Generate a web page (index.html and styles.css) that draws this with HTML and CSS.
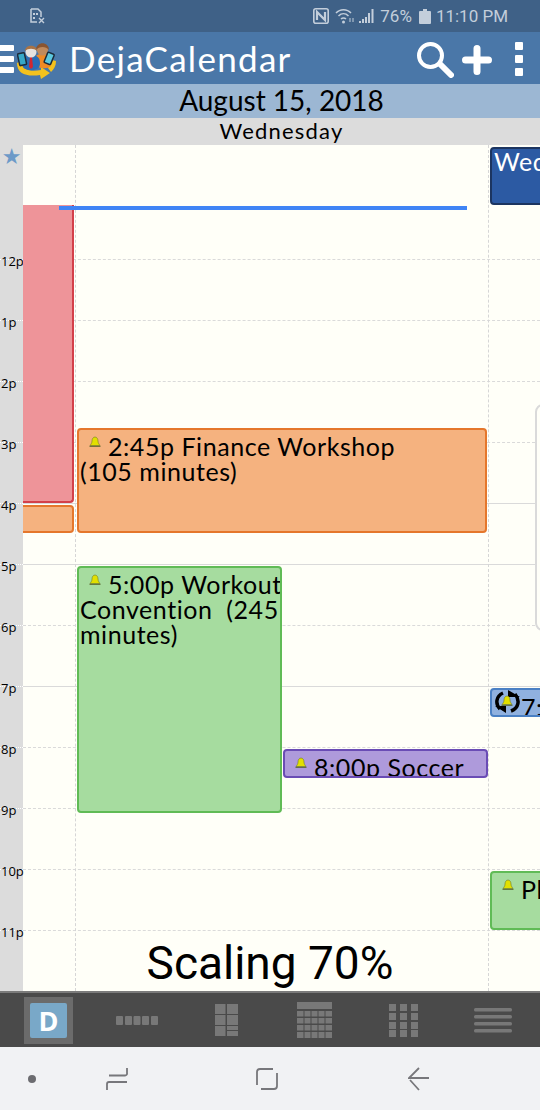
FILE: index.html
```html
<!DOCTYPE html>
<html lang="en">
<head>
  <meta charset="UTF-8" />
  <title>DejaCalendar</title>
  <link rel="stylesheet" href="styles.css">
</head>
<body>
  <div class="status-bar">
    <svg class="sim-icon" width="15" height="16" viewBox="0 0 15 16">
      <path d="M1 1h7l3 3v5M1 1v13h6" fill="none" stroke="#c3cedb" stroke-width="1.5"/>
      <path d="M3 5h2v2H3zM6 5h2v2H6zM3 9h2v2H3z" fill="#c3cedb"/>
      <path d="M9 10l5 5M14 10l-5 5" stroke="#c3cedb" stroke-width="1.4"/>
    </svg>
    <div class="status-right">
      <svg width="16" height="16" viewBox="0 0 16 16">
        <rect x="0.8" y="0.8" width="14.4" height="14.4" rx="2" fill="none" stroke="#c3cedb" stroke-width="1.6"/>
        <path d="M4 12V4l8 8V4" fill="none" stroke="#c3cedb" stroke-width="2.2"/>
      </svg>
      <svg class="wifi" width="21" height="16" viewBox="0 0 21 16">
        <path d="M1 5c4-4.500 11-4.500 15 0M3.500 8c3-3 7-3 10 0M6 11c1.500-1.500 3.500-1.500 5 0" fill="none" stroke="#c3cedb" stroke-width="1.5"/>
        <circle cx="8.500" cy="14" r="1.500" fill="#c3cedb"/>
        <path d="M15 10v4M18 14v-4" stroke="#97a9be" stroke-width="1.500"/>
      </svg>
      <svg class="signal" width="16" height="16" viewBox="0 0 16 16">
        <path d="M1 15v-2M4 15v-4M7 15V9M10 15V5M13.500 15V1" stroke="#c3cedb" stroke-width="2"/>
      </svg>
      <span class="status-text pct">76%</span>
      <svg class="battery" width="12" height="15" viewBox="0 0 12 15">
        <path d="M4 0h4v2h3a1 1 0 0 1 1 1v11a1 1 0 0 1-1 1H1a1 1 0 0 1-1-1V3a1 1 0 0 1 1-1h3z" fill="#c3cedb"/>
      </svg>
      <span class="status-text clock">11:10 PM</span>
    </div>
  </div>

  <header class="app-bar">
    <div class="menu-bars"><span></span><span></span><span></span></div>
    <svg class="logo" width="40" height="38" viewBox="0 0 40 38">
      <path d="M0 21C0 32 10 35 23 33l1 4 9-6-9-6v3C14 30 6 29 4 19z" fill="#f4c21d"/>
      <path d="M34 30c3-3 5-6 5-11l-4-1-4 8z" fill="#f4c21d"/>
      <path d="M19 14c3-3 11-3 14 0l1 10c-3 3-11 3-14 0z" fill="#ef8a25"/>
      <circle cx="25.500" cy="8" r="5.500" fill="#c08a5c"/>
      <path d="M19 8c0-9 13-9 13 0-3-4-10-4-13 0z" fill="#8a5530"/>
      <path d="M5 21c0-7 5-8 9-8s9 1 9 8c0 5-3 7-9 7s-9-2-9-7z" fill="#2a6db4"/>
      <path d="M13 15h2l1 10-2 2-2-2z" fill="#d3272e"/>
      <circle cx="14" cy="10" r="5.500" fill="#e6e2de"/>
      <path d="M8 9c0-7 12-7 12 0-3-3-9-3-12 0z" fill="#a87346"/>
      <rect x="0" y="0" width="7" height="12" rx="1" transform="translate(1 15) rotate(-12) translate(0 -3)" fill="#35a8c7" stroke="#1c2b3a" stroke-width="1.500"/>
      <rect x="0" y="0" width="7" height="11" rx="1" transform="translate(31 10) rotate(22)" fill="#5cc8de" stroke="#1c2b3a" stroke-width="1.500"/>
    </svg>
    <h1 class="app-title">DejaCalendar</h1>
    <div class="app-actions">
      <svg width="37" height="36" viewBox="0 0 37 36">
        <circle cx="13.500" cy="13.500" r="11.500" fill="none" stroke="#fff" stroke-width="4"/>
        <path d="M23 22l11 11" stroke="#fff" stroke-width="6" stroke-linecap="round"/>
      </svg>
      <svg class="plus" width="30" height="30" viewBox="0 0 30 30">
        <path d="M3.500 15h23M15 3.500v23" stroke="#fff" stroke-width="7" stroke-linecap="round"/>
      </svg>
      <div class="more-dots"><span></span><span></span><span></span></div>
    </div>
  </header>

  <div class="date-bar">August 15, 2018</div>
  <div class="weekday-bar">Wednesday</div>

  <main class="day-grid">
    <div class="allday-row"><span class="star">★</span></div>
    <div class="hour-row first"><span class="hour-label"></span><span class="hour-lane"></span></div>
    <div class="hour-row"><span class="hour-label">12p</span><span class="hour-lane"></span></div>
    <div class="hour-row"><span class="hour-label">1p</span><span class="hour-lane"></span></div>
    <div class="hour-row"><span class="hour-label">2p</span><span class="hour-lane"></span></div>
    <div class="hour-row"><span class="hour-label">3p</span><span class="hour-lane"></span></div>
    <div class="hour-row"><span class="hour-label">4p</span><span class="hour-lane solid"></span></div>
    <div class="hour-row"><span class="hour-label">5p</span><span class="hour-lane solid"></span></div>
    <div class="hour-row"><span class="hour-label">6p</span><span class="hour-lane"></span></div>
    <div class="hour-row"><span class="hour-label">7p</span><span class="hour-lane solid"></span></div>
    <div class="hour-row"><span class="hour-label">8p</span><span class="hour-lane"></span></div>
    <div class="hour-row"><span class="hour-label">9p</span><span class="hour-lane"></span></div>
    <div class="hour-row"><span class="hour-label">10p</span><span class="hour-lane"></span></div>
    <div class="hour-row"><span class="hour-label">11p</span><span class="hour-lane"></span></div>

    <div class="column-line line-a"></div>
    <div class="column-line line-b"></div>

    <div class="event ghost ev-ghost"></div>
    <div class="event pink ev-pink"></div>
    <div class="event orange ev-orange-small"></div>
    <div class="event orange ev-finance">
      <svg class="bell" viewBox="0 0 12 12"><use href="#bell"/></svg>
      <p class="event-text">2:45p Finance Workshop<br>(105 minutes)</p>
    </div>
    <div class="event green ev-workout">
      <svg class="bell" viewBox="0 0 12 12"><use href="#bell"/></svg>
      <p class="event-text">5:00p Workout<br>Convention&nbsp; (245<br>minutes)</p>
    </div>
    <div class="event purple ev-soccer">
      <svg class="bell" viewBox="0 0 12 12"><use href="#bell"/></svg>
      <p class="event-text">8:00p Soccer</p>
    </div>
    <div class="event navy ev-wed"><p class="event-text plain">Wed</p></div>
    <div class="event sky ev-seven">
      <svg class="sync" width="28" height="24" viewBox="0 0 28 24">
        <path d="M9 3C2 6 1 14 6 19M17 21c8-3 9-11 4-17" fill="none" stroke="#000" stroke-width="3.500"/>
        <path d="M1 16h11v7zM26 7H14V0z" fill="#000"/>
      </svg>
      <svg class="bell" viewBox="0 0 12 12"><use href="#bell"/></svg>
      <p class="event-text seven">7:00p</p>
    </div>
    <div class="event green ev-plan">
      <svg class="bell" viewBox="0 0 12 12"><use href="#bell"/></svg>
      <p class="event-text">Plan</p>
    </div>

    <div class="now-line"></div>
    <div class="scale-toast">Scaling 70%</div>
  </main>

  <nav class="view-tabs">
    <div class="view-tab"><span class="day-tile"><span class="day-letter">D</span></span></div>
    <div class="view-tab">
      <svg width="42" height="9" viewBox="0 0 42 9" fill="#787878">
        <rect x="0" width="7" height="9" rx="1"/><rect x="9" width="7" height="9" rx="1"/><rect x="17.500" width="7" height="9" rx="1"/><rect x="26" width="7" height="9" rx="1"/><rect x="35" width="7" height="9" rx="1"/>
      </svg>
    </div>
    <div class="view-tab">
      <svg width="23" height="32" viewBox="0 0 23 32" fill="#787878">
        <rect width="10.500" height="10"/><rect x="12" width="11" height="10"/><rect y="11" width="10.500" height="10"/><rect x="12" y="11" width="11" height="10"/><rect y="22" width="10.500" height="10"/><rect x="12" y="22" width="11" height="4"/><rect x="12" y="27" width="11" height="5"/>
      </svg>
    </div>
    <div class="view-tab">
      <svg width="35" height="36" viewBox="0 0 35 36" fill="#787878">
        <rect width="35" height="7"/>
        <rect y="9" width="35" height="5.500"/><rect y="16" width="35" height="5.500"/><rect y="23" width="35" height="5.500"/><rect y="30" width="35" height="6"/>
        <path d="M7 9v27M14 9v27M21 9v27M28 9v27" stroke="#4a4a4a" stroke-width="1"/>
      </svg>
    </div>
    <div class="view-tab">
      <svg width="29" height="33" viewBox="0 0 29 33" fill="#787878">
        <rect width="7" height="7"/><rect x="11" width="7" height="7"/><rect x="22" width="7" height="7"/>
        <rect y="9" width="7" height="7"/><rect x="11" y="9" width="7" height="7"/><rect x="22" y="9" width="7" height="7"/>
        <rect y="18" width="7" height="7"/><rect x="11" y="18" width="7" height="7"/><rect x="22" y="18" width="7" height="7"/>
        <rect y="26" width="7" height="7"/><rect x="11" y="26" width="7" height="7"/><rect x="22" y="26" width="7" height="7"/>
      </svg>
    </div>
    <div class="view-tab">
      <svg width="38" height="25" viewBox="0 0 38 25" fill="#787878">
        <rect width="38" height="3.500" rx="1.500"/><rect y="7" width="38" height="3.500" rx="1.500"/><rect y="14" width="38" height="3.500" rx="1.500"/><rect y="21" width="38" height="3.500" rx="1.500"/>
      </svg>
    </div>
  </nav>

  <footer class="nav-bar">
    <svg class="nav-dot" width="8" height="8" viewBox="0 0 8 8"><circle cx="4" cy="4" r="4" fill="#6c6c70"/></svg>
    <svg class="nav-recent" width="22" height="24" viewBox="0 0 22 24">
      <path d="M21 1v5a2 2 0 0 1-2 2.500H3M1 23v-6a2 2 0 0 1 2-2h18" fill="none" stroke="#77777b" stroke-width="1.800"/>
    </svg>
    <svg class="nav-home" width="22" height="22" viewBox="0 0 22 22">
      <path d="M1 17V4a3 3 0 0 1 3-3h13M21 5v13a3 3 0 0 1-3 3H5" fill="none" stroke="#77777b" stroke-width="1.800"/>
    </svg>
    <svg class="nav-back" width="22" height="24" viewBox="0 0 22 24">
      <path d="M11 1L1 11h20M2 13l9 10" fill="none" stroke="#77777b" stroke-width="1.800"/>
    </svg>
  </footer>

  <svg class="defs" width="0" height="0">
    <symbol id="bell" viewBox="0 0 12 12">
      <path d="M6 1c-2 0-3 2-3 4 0 2-1 3-2 4.500h10C10 8 9 7 9 5c0-2-1-4-3-4z" fill="#e2e000" stroke="#6d7a2a" stroke-width="0.600"/>
      <rect x="0.500" y="9.800" width="11" height="1" fill="#55602c"/>
    </symbol>
  </svg>
</body>
</html>
```

FILE: styles.css
```css
* {
  box-sizing: border-box;
}

body {
  margin: 0;
  width: 540px;
  height: 1110px;
  overflow: hidden;
  display: flex;
  flex-direction: column;
  font-family: Lato, "Open Sans", sans-serif;
  color: #000;
  background-color: #fffff8;
}

/* Status bar */
.status-bar {
  height: 32px;
  flex: none;
  display: flex;
  align-items: center;
  justify-content: space-between;
  padding: 0 32px 0 30px;
  background-color: #3f6187;
}

.status-right {
  display: flex;
  align-items: center;
}

.wifi {
  margin-left: 6px;
}

.signal {
  margin-left: 3px;
}

.status-text {
  font-family: Roboto, sans-serif;
  font-size: 17px;
  color: #c3cedb;
}

.pct {
  margin-left: 5px;
}

.battery {
  margin-left: 7px;
}

.clock {
  margin-left: 5px;
}

/* App bar */
.app-bar {
  height: 52px;
  flex: none;
  display: flex;
  align-items: center;
  background-color: #4a77a8;
}

.menu-bars {
  width: 14px;
  display: flex;
  flex-direction: column;
  gap: 5px;
  margin-top: 2px;
}

.menu-bars span {
  display: block;
  height: 6px;
  border-radius: 0 1px 1px 0;
  background-color: #fff;
}

.logo {
  margin-left: 3px;
  margin-top: 6px;
  flex: none;
}

.app-title {
  margin: 0 0 0 12px;
  font-size: 35px;
  font-weight: 400;
  color: #fff;
  letter-spacing: 1.3px;
}

.app-actions {
  margin-left: auto;
  display: flex;
  align-items: center;
  padding-right: 17px;
  margin-top: 4px;
}

.plus {
  margin-left: 8px;
}

.more-dots {
  margin-left: 23px;
  display: flex;
  flex-direction: column;
  gap: 5px;
  margin-top: -2px;
}

.more-dots span {
  display: block;
  width: 8px;
  height: 8px;
  border-radius: 1px;
  background-color: #fff;
}

/* Date headers */
.date-bar {
  height: 34px;
  flex: none;
  padding-left: 23px;
  text-align: center;
  font-size: 28px;
  line-height: 33px;
  background-color: #9cb7d3;
}

.weekday-bar {
  height: 27px;
  flex: none;
  padding-left: 23px;
  text-align: center;
  font-size: 22px;
  line-height: 25px;
  letter-spacing: 1.2px;
  background-color: #dcdcdc;
}

/* Day grid */
.day-grid {
  flex: 1;
  position: relative;
  overflow: hidden;
  background: linear-gradient(to right, #dcdcdc 23px, #fffff8 23px);
}

.allday-row {
  height: 53px;
}

.star {
  display: block;
  width: 23px;
  text-align: center;
  font-family: "DejaVu Sans", sans-serif;
  font-size: 22px;
  line-height: 24px;
  color: #6c9ac8;
}

.hour-row {
  height: 61px;
  display: grid;
  grid-template-columns: 23px 1fr;
  background: repeating-linear-gradient(to right, #fff 0 1px, transparent 1px 2px) 0 0 / 23px 1px no-repeat;
}

.hour-row.first {
  background: none;
}

.hour-row.first .hour-lane {
  border-top: 0;
}

.hour-label {
  margin-top: -6px;
  height: 16px;
  font-family: "Open Sans", sans-serif;
  font-size: 13px;
  line-height: 16px;
  padding-left: 1px;
  white-space: nowrap;
}

.hour-lane {
  border-top: 1px dashed #dadada;
}

.hour-lane.solid {
  border-top: 1px solid #dadada;
}

.column-line {
  position: absolute;
  top: 0;
  bottom: 0;
  border-left: 1px dashed #d6d6d6;
}

.line-a {
  left: 75px;
}

.line-b {
  left: 488px;
}

/* Events */
.event {
  position: absolute;
  overflow: hidden;
  border: 2px solid;
  border-radius: 4px;
}

.event-text {
  margin: 0;
  padding: 4px 0 0 1px;
  font-size: 25px;
  line-height: 25px;
  letter-spacing: 0.55px;
  white-space: nowrap;
}

.bell + .event-text {
  text-indent: 28px;
}

.event-text.plain {
  color: #fff;
  padding-left: 2px;
  padding-top: 0;
}

.event-text.seven {
  padding-top: 5px;
}

.bell {
  position: absolute;
  left: 10px;
  top: 6px;
  width: 12px;
  height: 12px;
}

.sync {
  position: absolute;
  left: 2px;
  top: 0;
}

.pink {
  background-color: #ee9499;
  border-color: #d3404a;
}

.orange {
  background-color: #f5b27f;
  border-color: #e5772c;
}

.green {
  background-color: #a6dc9f;
  border-color: #60bb56;
}

.purple {
  background-color: #ae9adb;
  border-color: #6a4cb5;
}

.navy {
  background-color: #2c5aa3;
  border-color: #1c3560;
}

.sky {
  background-color: #90b1df;
  border-color: #4a80c4;
}

.ghost {
  background-color: #fffff8;
  border-color: #dadada;
  border-radius: 8px;
}

.ev-ghost {
  left: 535px;
  top: 259px;
  width: 40px;
  height: 227px;
}

.ev-pink {
  left: 23px;
  top: 60px;
  width: 51px;
  height: 298px;
  border-width: 0 2px 2px 0;
  border-radius: 0 0 4px 0;
}

.ev-orange-small {
  left: 23px;
  top: 360px;
  width: 51px;
  height: 28px;
  border-left: 0;
  border-radius: 0 4px 4px 0;
}

.ev-finance {
  left: 77px;
  top: 283px;
  width: 410px;
  height: 105px;
}

.ev-workout {
  left: 77px;
  top: 421px;
  width: 205px;
  height: 247px;
}

.ev-soccer {
  left: 283px;
  top: 604px;
  width: 205px;
  height: 29px;
}

.ev-wed {
  left: 490px;
  top: 2px;
  width: 70px;
  height: 58px;
}

.ev-seven {
  left: 490px;
  top: 543px;
  width: 70px;
  height: 29px;
}

.ev-seven .bell {
  left: 9px;
  top: 5px;
}

.ev-plan {
  left: 490px;
  top: 726px;
  width: 70px;
  height: 59px;
}

.now-line {
  position: absolute;
  left: 59px;
  top: 61px;
  width: 408px;
  height: 4px;
  background-color: #3f84f5;
}

.scale-toast {
  position: absolute;
  left: 0;
  right: 0;
  top: 790px;
  text-align: center;
  font-family: Roboto, sans-serif;
  font-size: 46px;
  line-height: 56px;
}

/* View tabs */
.view-tabs {
  height: 56px;
  flex: none;
  display: grid;
  grid-template-columns: repeat(6, 1fr);
  padding: 0 3px 0 4px;
  border-top: 2px solid #7b7b7b;
  background-color: #4a4a4a;
}

.view-tab {
  display: flex;
  align-items: center;
  justify-content: center;
}

.day-tile {
  width: 49px;
  height: 47px;
  display: flex;
  align-items: center;
  justify-content: center;
  background-color: #6b6b6b;
}

.day-letter {
  width: 37px;
  height: 35px;
  text-align: center;
  font-family: "Open Sans", sans-serif;
  font-size: 27px;
  font-weight: 700;
  line-height: 35px;
  border-radius: 2px;
  color: #fff;
  background-color: #79a8c8;
}

/* Android nav bar */
.nav-bar {
  height: 63px;
  flex: none;
  display: flex;
  align-items: center;
  padding-left: 28px;
  background-color: #f1f2f4;
}

.nav-recent {
  margin-left: 70px;
}

.nav-home {
  margin-left: 128px;
}

.nav-back {
  margin-left: 130px;
}

.defs {
  position: absolute;
}
```
